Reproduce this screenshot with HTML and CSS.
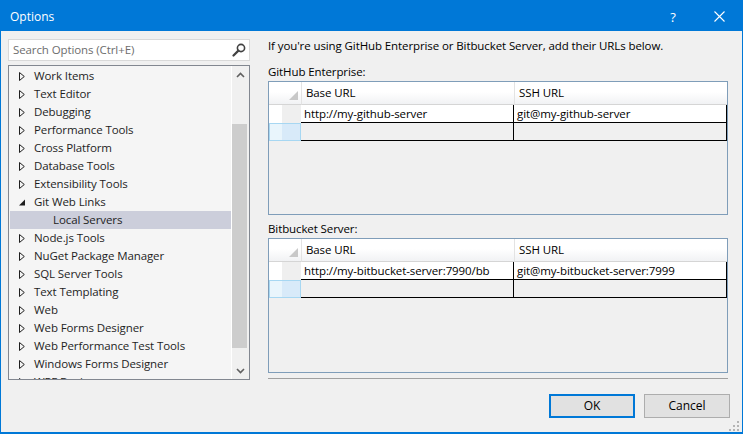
FILE: index.html
```html
<!DOCTYPE html>
<html>
<head>
<meta charset="utf-8">
<title>Options</title>
<link rel="stylesheet" href="styles.css">
</head>
<body>
<div class="window">
  <div class="titlebar">
    <span class="title">Options</span>
    <span class="tb-btn help">?</span>
    <span class="tb-btn close">
      <svg width="11" height="11" viewBox="0 0 11 11"><path d="M0.5 0.5 L10.5 10.5 M10.5 0.5 L0.5 10.5" stroke="#fff" stroke-width="1.1" fill="none"/></svg>
    </span>
  </div>
  <div class="main">
    <div class="left">
      <div class="search">
        <span class="placeholder">Search Options (Ctrl+E)</span>
        <svg class="mag" width="14" height="14" viewBox="0 0 14 14"><circle cx="9" cy="5" r="3.6" fill="none" stroke="#424242" stroke-width="1.6"/><path d="M6.4 7.6 L1.5 12.5" stroke="#424242" stroke-width="2.2" stroke-linecap="round"/></svg>
      </div>
      <div class="tree">
        <div class="tree-list">
          <div class="item"><span class="arrow"><svg width="6" height="9" viewBox="0 0 6 9"><path d="M0.5 0.5 L5.3 4.5 L0.5 8.5 Z" fill="none" stroke="#1e1e1e"/></svg></span>Work Items</div>
          <div class="item"><span class="arrow"><svg width="6" height="9" viewBox="0 0 6 9"><path d="M0.5 0.5 L5.3 4.5 L0.5 8.5 Z" fill="none" stroke="#1e1e1e"/></svg></span>Text Editor</div>
          <div class="item"><span class="arrow"><svg width="6" height="9" viewBox="0 0 6 9"><path d="M0.5 0.5 L5.3 4.5 L0.5 8.5 Z" fill="none" stroke="#1e1e1e"/></svg></span>Debugging</div>
          <div class="item"><span class="arrow"><svg width="6" height="9" viewBox="0 0 6 9"><path d="M0.5 0.5 L5.3 4.5 L0.5 8.5 Z" fill="none" stroke="#1e1e1e"/></svg></span>Performance Tools</div>
          <div class="item"><span class="arrow"><svg width="6" height="9" viewBox="0 0 6 9"><path d="M0.5 0.5 L5.3 4.5 L0.5 8.5 Z" fill="none" stroke="#1e1e1e"/></svg></span>Cross Platform</div>
          <div class="item"><span class="arrow"><svg width="6" height="9" viewBox="0 0 6 9"><path d="M0.5 0.5 L5.3 4.5 L0.5 8.5 Z" fill="none" stroke="#1e1e1e"/></svg></span>Database Tools</div>
          <div class="item"><span class="arrow"><svg width="6" height="9" viewBox="0 0 6 9"><path d="M0.5 0.5 L5.3 4.5 L0.5 8.5 Z" fill="none" stroke="#1e1e1e"/></svg></span>Extensibility Tools</div>
          <div class="item"><span class="arrow"><svg width="6" height="9" viewBox="0 0 6 9"><path d="M6 1.5 L6 7.5 L0 7.5 Z" fill="#1e1e1e"/></svg></span>Git Web Links</div>
          <div class="item child selected">Local Servers</div>
          <div class="item"><span class="arrow"><svg width="6" height="9" viewBox="0 0 6 9"><path d="M0.5 0.5 L5.3 4.5 L0.5 8.5 Z" fill="none" stroke="#1e1e1e"/></svg></span>Node.js Tools</div>
          <div class="item"><span class="arrow"><svg width="6" height="9" viewBox="0 0 6 9"><path d="M0.5 0.5 L5.3 4.5 L0.5 8.5 Z" fill="none" stroke="#1e1e1e"/></svg></span>NuGet Package Manager</div>
          <div class="item"><span class="arrow"><svg width="6" height="9" viewBox="0 0 6 9"><path d="M0.5 0.5 L5.3 4.5 L0.5 8.5 Z" fill="none" stroke="#1e1e1e"/></svg></span>SQL Server Tools</div>
          <div class="item"><span class="arrow"><svg width="6" height="9" viewBox="0 0 6 9"><path d="M0.5 0.5 L5.3 4.5 L0.5 8.5 Z" fill="none" stroke="#1e1e1e"/></svg></span>Text Templating</div>
          <div class="item"><span class="arrow"><svg width="6" height="9" viewBox="0 0 6 9"><path d="M0.5 0.5 L5.3 4.5 L0.5 8.5 Z" fill="none" stroke="#1e1e1e"/></svg></span>Web</div>
          <div class="item"><span class="arrow"><svg width="6" height="9" viewBox="0 0 6 9"><path d="M0.5 0.5 L5.3 4.5 L0.5 8.5 Z" fill="none" stroke="#1e1e1e"/></svg></span>Web Forms Designer</div>
          <div class="item"><span class="arrow"><svg width="6" height="9" viewBox="0 0 6 9"><path d="M0.5 0.5 L5.3 4.5 L0.5 8.5 Z" fill="none" stroke="#1e1e1e"/></svg></span>Web Performance Test Tools</div>
          <div class="item"><span class="arrow"><svg width="6" height="9" viewBox="0 0 6 9"><path d="M0.5 0.5 L5.3 4.5 L0.5 8.5 Z" fill="none" stroke="#1e1e1e"/></svg></span>Windows Forms Designer</div>
          <div class="item"><span class="arrow"><svg width="6" height="9" viewBox="0 0 6 9"><path d="M0.5 0.5 L5.3 4.5 L0.5 8.5 Z" fill="none" stroke="#1e1e1e"/></svg></span>WPF Designer</div>
        </div>
        <div class="scrollbar">
          <div class="sb-btn"><svg width="9" height="6" viewBox="0 0 9 6"><path d="M1 5 L4.5 1.5 L8 5" fill="none" stroke="#606060" stroke-width="1.6"/></svg></div>
          <div class="sb-track"><div class="thumb"></div></div>
          <div class="sb-btn"><svg width="9" height="6" viewBox="0 0 9 6"><path d="M1 1 L4.5 4.5 L8 1" fill="none" stroke="#606060" stroke-width="1.6"/></svg></div>
        </div>
      </div>
    </div>
    <div class="right">
      <p class="intro">If you're using GitHub Enterprise or Bitbucket Server, add their URLs below.</p>
      <div class="label">GitHub Enterprise:</div>
      <div class="grid grid-a">
        <div class="cells">
          <div class="corner"><svg width="9" height="9" viewBox="0 0 9 9"><path d="M9 0 L9 9 L0 9 Z" fill="#c8c8c8"/></svg></div>
          <div class="hc">Base URL</div>
          <div class="hc">SSH URL</div>
          <div class="rh"></div>
          <div class="dc filled">http://my-github-server</div>
          <div class="dc filled">git@my-github-server</div>
          <div class="rh new"></div>
          <div class="dc"></div>
          <div class="dc"></div>
        </div>
      </div>
      <div class="label label-b">Bitbucket Server:</div>
      <div class="grid grid-b">
        <div class="cells">
          <div class="corner"><svg width="9" height="9" viewBox="0 0 9 9"><path d="M9 0 L9 9 L0 9 Z" fill="#c8c8c8"/></svg></div>
          <div class="hc">Base URL</div>
          <div class="hc">SSH URL</div>
          <div class="rh"></div>
          <div class="dc filled">http://my-bitbucket-server:7990/bb</div>
          <div class="dc filled">git@my-bitbucket-server:7999</div>
          <div class="rh new"></div>
          <div class="dc"></div>
          <div class="dc"></div>
        </div>
      </div>
      <div class="sep"></div>
    </div>
  </div>
  <div class="footer">
    <button class="btn ok">OK</button>
    <button class="btn">Cancel</button>
  </div>
  <svg class="grip" width="10" height="10" viewBox="0 0 10 10">
    <rect x="8" y="0" width="2" height="2" fill="#b4b4b4"/>
    <rect x="4" y="4" width="2" height="2" fill="#b4b4b4"/>
    <rect x="8" y="4" width="2" height="2" fill="#b4b4b4"/>
    <rect x="0" y="8" width="2" height="2" fill="#b4b4b4"/>
    <rect x="4" y="8" width="2" height="2" fill="#b4b4b4"/>
    <rect x="8" y="8" width="2" height="2" fill="#b4b4b4"/>
  </svg>
</div>
</body>
</html>
```

FILE: styles.css
```css
* { box-sizing: border-box; }
html, body { margin: 0; padding: 0; }
body {
  width: 743px;
  height: 434px;
  overflow: hidden;
  background: #f0f0f0;
  font-family: "Open Sans", "Noto Sans", "Liberation Sans", sans-serif;
  font-size: 11.5px;
  letter-spacing: -0.1px;
  color: #000;
}
.window {
  position: relative;
  width: 743px;
  height: 434px;
  border: 1px solid #0078d7;
  border-bottom-width: 2px;
  background: #f0f0f0;
  display: flex;
  flex-direction: column;
}
.titlebar {
  height: 30px;
  flex: none;
  background: #0078d7;
  color: #fff;
  display: flex;
  align-items: center;
  padding-left: 9px;
  font-size: 12px;
  letter-spacing: 0;
}
.title { flex: 1; line-height: 16px; padding-top: 1px; }
.tb-btn {
  width: 46px;
  height: 30px;
  display: flex;
  align-items: center;
  justify-content: center;
}
.help { font-size: 13px; padding-top: 1px; }
.close svg { display: block; }

.main {
  display: flex;
  gap: 18px;
  padding: 7px 14px 0 7px;
  flex: none;
}
.left { width: 242px; flex: none; display: flex; flex-direction: column; }
.search {
  margin-top: 1px;
  height: 22px;
  border: 1px solid #d9d9d9;
  background: #fff;
  display: flex;
  align-items: center;
  padding: 0 2px 0 4px;
}
.placeholder { flex: 1; color: #6d6d6d; line-height: 16px; }
.mag { display: block; margin-right: 1px; }

.tree {
  margin-top: 4px;
  height: 315px;
  border: 1px solid #828790;
  background: #f5f5f5;
  display: flex;
}
.tree-list {
  flex: 1;
  margin-left: 1px;
  padding-top: 1px;
  overflow: hidden;
  color: #1e1e1e;
}
.item {
  height: 18px;
  display: flex;
  align-items: center;
  padding-left: 9px;
  white-space: nowrap;
  line-height: 18px;
}
.arrow { width: 15px; flex: none; display: flex; align-items: center; }
.arrow svg { display: block; }
.child { padding-left: 43px; }
.selected { background: #cccedb; }

.scrollbar {
  width: 18px;
  flex: none;
  border-left: 1px solid #fff;
  background: #f0f0f0;
  display: flex;
  flex-direction: column;
}
.sb-btn {
  height: 17px;
  display: flex;
  align-items: center;
  justify-content: center;
}
.sb-btn svg { display: block; }
.sb-track { flex: 1; }
.thumb {
  margin-top: 41px;
  height: 224px;
  width: 15px;
  background: #cdcdcd;
}

.right { width: 460px; flex: none; display: flex; flex-direction: column; }
.intro { margin: 0; line-height: 16px; white-space: nowrap; }
.label { margin-top: 10px; line-height: 16px; }
.label-b { margin-top: 6px; }
.grid {
  margin-top: 1px;
  border: 1px solid #7f9db9;
  background: #f0f0f0;
}
.grid-a { height: 134px; }
.grid-b { height: 135px; }
.cells {
  display: grid;
  grid-template-columns: 32px 213px 213px;
  grid-template-rows: 23px 18px 18px;
}
.corner {
  background: linear-gradient(#ffffff, #ffffff 45%, #f1f2f4);
  border-bottom: 1px solid #d5d5d5;
  display: flex;
  align-items: flex-end;
  justify-content: flex-end;
  padding: 0 3px 4px 0;
}
.corner svg { display: block; }
.hc {
  background: linear-gradient(#ffffff, #ffffff 45%, #f1f2f4);
  border-bottom: 1px solid #d5d5d5;
  border-left: 1px solid #e3e3e3;
  padding-left: 4px;
  line-height: 21px;
  white-space: nowrap;
}
.rh {
  background: linear-gradient(to right, #ffffff 0 13px, #efefef 13px);
}
.rh.new {
  background: linear-gradient(to right, #e9f5fc 0 12px, #d8eaf9 12px);
  border: 1px solid #a7d7f2;
}
.dc {
  border-right: 1px solid #000;
  border-bottom: 1px solid #000;
  padding-left: 3px;
  line-height: 17px;
  white-space: nowrap;
  overflow: hidden;
}
.dc.filled { background: #fff; }
.sep { margin-top: 5px; height: 1px; background: #a0a0a0; }

.footer {
  display: flex;
  justify-content: flex-end;
  gap: 9px;
  padding: 14px 12px 0 0;
}
.btn {
  width: 86px;
  height: 24px;
  margin: 0;
  padding: 0;
  background: #e1e1e1;
  border: 1px solid #adadad;
  font-family: inherit;
  font-size: 12px;
  color: #000;
  line-height: 20px;
}
.btn.ok { border: 2px solid #0078d7; }
.grip { position: absolute; right: 3px; bottom: 1px; display: block; }
```
